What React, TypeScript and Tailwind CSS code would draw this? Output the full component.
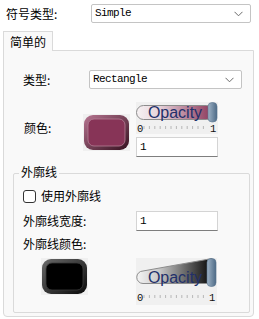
const cjk = { fontFamily: '"Noto Sans CJK SC", "Microsoft YaHei", sans-serif' };
const mono = { fontFamily: '"Liberation Mono", "Courier New", monospace' };

function Chevron() {
  return (
    <svg width="9" height="6" viewBox="0 0 9 6" className="shrink-0">
      <path d="M0.5 0.8 L4.5 4.8 L8.5 0.8" fill="none" stroke="#6b6b6b" strokeWidth="1" />
    </svg>
  );
}

function Select({ value, width }: { value: string; width: string }) {
  return (
    <div className={`${width} h-[19px] flex items-center justify-between pl-[3px] pr-[7px] bg-white border border-[#c4c4c4] rounded-[2px]`}>
      <span className="text-[11px] tracking-[-0.6px] text-black leading-none" style={mono}>{value}</span>
      <Chevron />
    </div>
  );
}

function TextBox({ value }: { value: string }) {
  return (
    <div className="w-[82px] h-[20px] flex items-center pl-[3px] bg-white border border-[#d4d4d4] border-b-[#7e7e7e]">
      <span className="text-[11px] tracking-[-0.6px] text-black leading-none" style={mono}>{value}</span>
    </div>
  );
}

function Swatch({ id, fill, light, dark, line }: { id: string; fill: string; light: string; dark: string; line: string }) {
  return (
    <svg width="47" height="37" viewBox="0 0 47 37" className="shrink-0">
      <defs>
        <linearGradient id={id} x1="0" y1="0" x2="1" y2="1">
          <stop offset="0" stopColor={light} />
          <stop offset="1" stopColor={dark} />
        </linearGradient>
      </defs>
      <rect x="0" y="0" width="47" height="37" fill="#f0f0f0" />
      <rect x="1" y="1" width="45" height="35" rx="9" fill={`url(#${id})`} />
      <rect x="5" y="5" width="37" height="27" rx="6" fill={fill} stroke={line} strokeWidth="0.8" />
    </svg>
  );
}

function Ticks({ y, w }: { y: number; w: number }) {
  const xs = Array.from({ length: 12 }, (_, i) => 8 + i * 5.4);
  return (
    <g>
      {xs.map((x) => (
        <line key={x} x1={x} y1={y} x2={x} y2={y + 3} stroke="#a8a8a8" strokeWidth="0.8" />
      ))}
      <text x="1" y={y + 6} fontSize="10.5" fontFamily="Liberation Mono, monospace" fill="#111">0</text>
      <text x={w - 8} y={y + 6} fontSize="10.5" fontFamily="Liberation Mono, monospace" fill="#111">1</text>
    </g>
  );
}

function ColorOpacity() {
  return (
    <svg width="82" height="32" viewBox="0 0 82 32" className="block">
      <defs>
        <linearGradient id="op1" x1="0" y1="0" x2="1" y2="0">
          <stop offset="0" stopColor="#f6f2f3" />
          <stop offset="0.3" stopColor="#e6d2da" />
          <stop offset="1" stopColor="#8a3558" />
        </linearGradient>
        <linearGradient id="th1" x1="0" y1="0" x2="1" y2="0">
          <stop offset="0" stopColor="#9fb3c6" />
          <stop offset="1" stopColor="#4d6a86" />
        </linearGradient>
      </defs>
      <rect width="82" height="32" fill="#f0f0f0" />
      <rect x="0.5" y="3.5" width="77" height="14" rx="7" fill="url(#op1)" stroke="#8c8c8c" strokeWidth="1" />
      <text x="39" y="16" textAnchor="middle" fontSize="16" fontFamily="Liberation Sans, Arial, sans-serif" fill="#22306a">Opacity</text>
      <rect x="72" y="0.5" width="9" height="19.5" rx="4" fill="url(#th1)" stroke="#5d7790" strokeWidth="0.6" />
      <Ticks y={24} w={82} />
    </svg>
  );
}

function LineOpacity() {
  return (
    <svg width="81" height="47" viewBox="0 0 81 47" className="block">
      <defs>
        <linearGradient id="op2" x1="0" y1="0" x2="1" y2="0">
          <stop offset="0" stopColor="#f4f4f4" />
          <stop offset="0.3" stopColor="#c8c8c8" />
          <stop offset="1" stopColor="#050505" />
        </linearGradient>
        <linearGradient id="th2" x1="0" y1="0" x2="1" y2="0">
          <stop offset="0" stopColor="#9fb3c6" />
          <stop offset="1" stopColor="#4d6a86" />
        </linearGradient>
      </defs>
      <rect width="81" height="47" fill="#f0f0f0" />
      <path d="M7 13 L76 0.5 L76 25.5 L7 25.5 A6.25 6.25 0 0 1 7 13 Z" fill="url(#op2)" stroke="#8c8c8c" strokeWidth="1" />
      <text x="39" y="25" textAnchor="middle" fontSize="16" fontFamily="Liberation Sans, Arial, sans-serif" fill="#22306a">Opacity</text>
      <rect x="71" y="0.5" width="9" height="28" rx="4" fill="url(#th2)" stroke="#5d7790" strokeWidth="0.6" />
      <Ticks y={37} w={81} />
    </svg>
  );
}

export default function App() {
  return (
    <div className="w-[259px] h-[319px] bg-white text-[12px] text-black leading-[16px] overflow-hidden" style={cjk}>
      <div className="flex items-center pt-[4px] pl-[6px]">
        <span className="w-[85px]">符号类型:</span>
        <Select value="Simple" width="w-[160px]" />
      </div>

      <div className="ml-[3px] mt-[8px] w-[50px] h-[20px] relative z-10 bg-[#f9f9f9] border border-b-0 border-[#dadada] flex items-center pl-[6px]">
        简单的
      </div>

      <div className="ml-[3px] mr-[5px] -mt-px h-[267px] bg-[#f9f9f9] border border-[#dadada] rounded-b-[4px]">
        <div className="flex items-center mt-[19px]">
          <span className="w-[85px] pl-[19px]">类型:</span>
          <Select value="Rectangle" width="w-[153px]" />
        </div>

        <div className="flex items-start mt-[13px]">
          <span className="w-[79px] pl-[20px] mt-[18px]">颜色:</span>
          <div className="mt-[12px]">
            <Swatch id="sw1" fill="#873457" light="#b77591" dark="#35101f" line="#b57d95" />
          </div>
          <div className="ml-[6px] flex flex-col">
            <ColorOpacity />
            <div className="mt-[3px]">
              <TextBox value="1" />
            </div>
          </div>
        </div>

        <div className="relative ml-[9px] mr-[3px] mt-[16px] h-[140px] border border-[#dadada] rounded-[2px]">
          <span className="absolute -top-[10px] left-[5px] px-[2px] bg-[#f9f9f9]">外廓线</span>

          <div className="flex items-center mt-[14px] pl-[9px]">
            <div className="w-[13px] h-[13px] bg-white border border-[#333] rounded-[3px]" />
            <span className="ml-[5px]">使用外廓线</span>
          </div>

          <div className="flex items-center mt-[7px]">
            <span className="w-[122px] pl-[9px]">外廓线宽度:</span>
            <TextBox value="1" />
          </div>

          <div className="mt-[5px] pl-[9px]">外廓线颜色:</div>

          <div className="flex items-start mt-[6px] pl-[27px]">
            <Swatch id="sw2" fill="#000000" light="#6a6a6a" dark="#0a0a0a" line="#3a3a3a" />
            <div className="ml-[48px]">
              <LineOpacity />
            </div>
          </div>
        </div>
      </div>
    </div>
  );
}
